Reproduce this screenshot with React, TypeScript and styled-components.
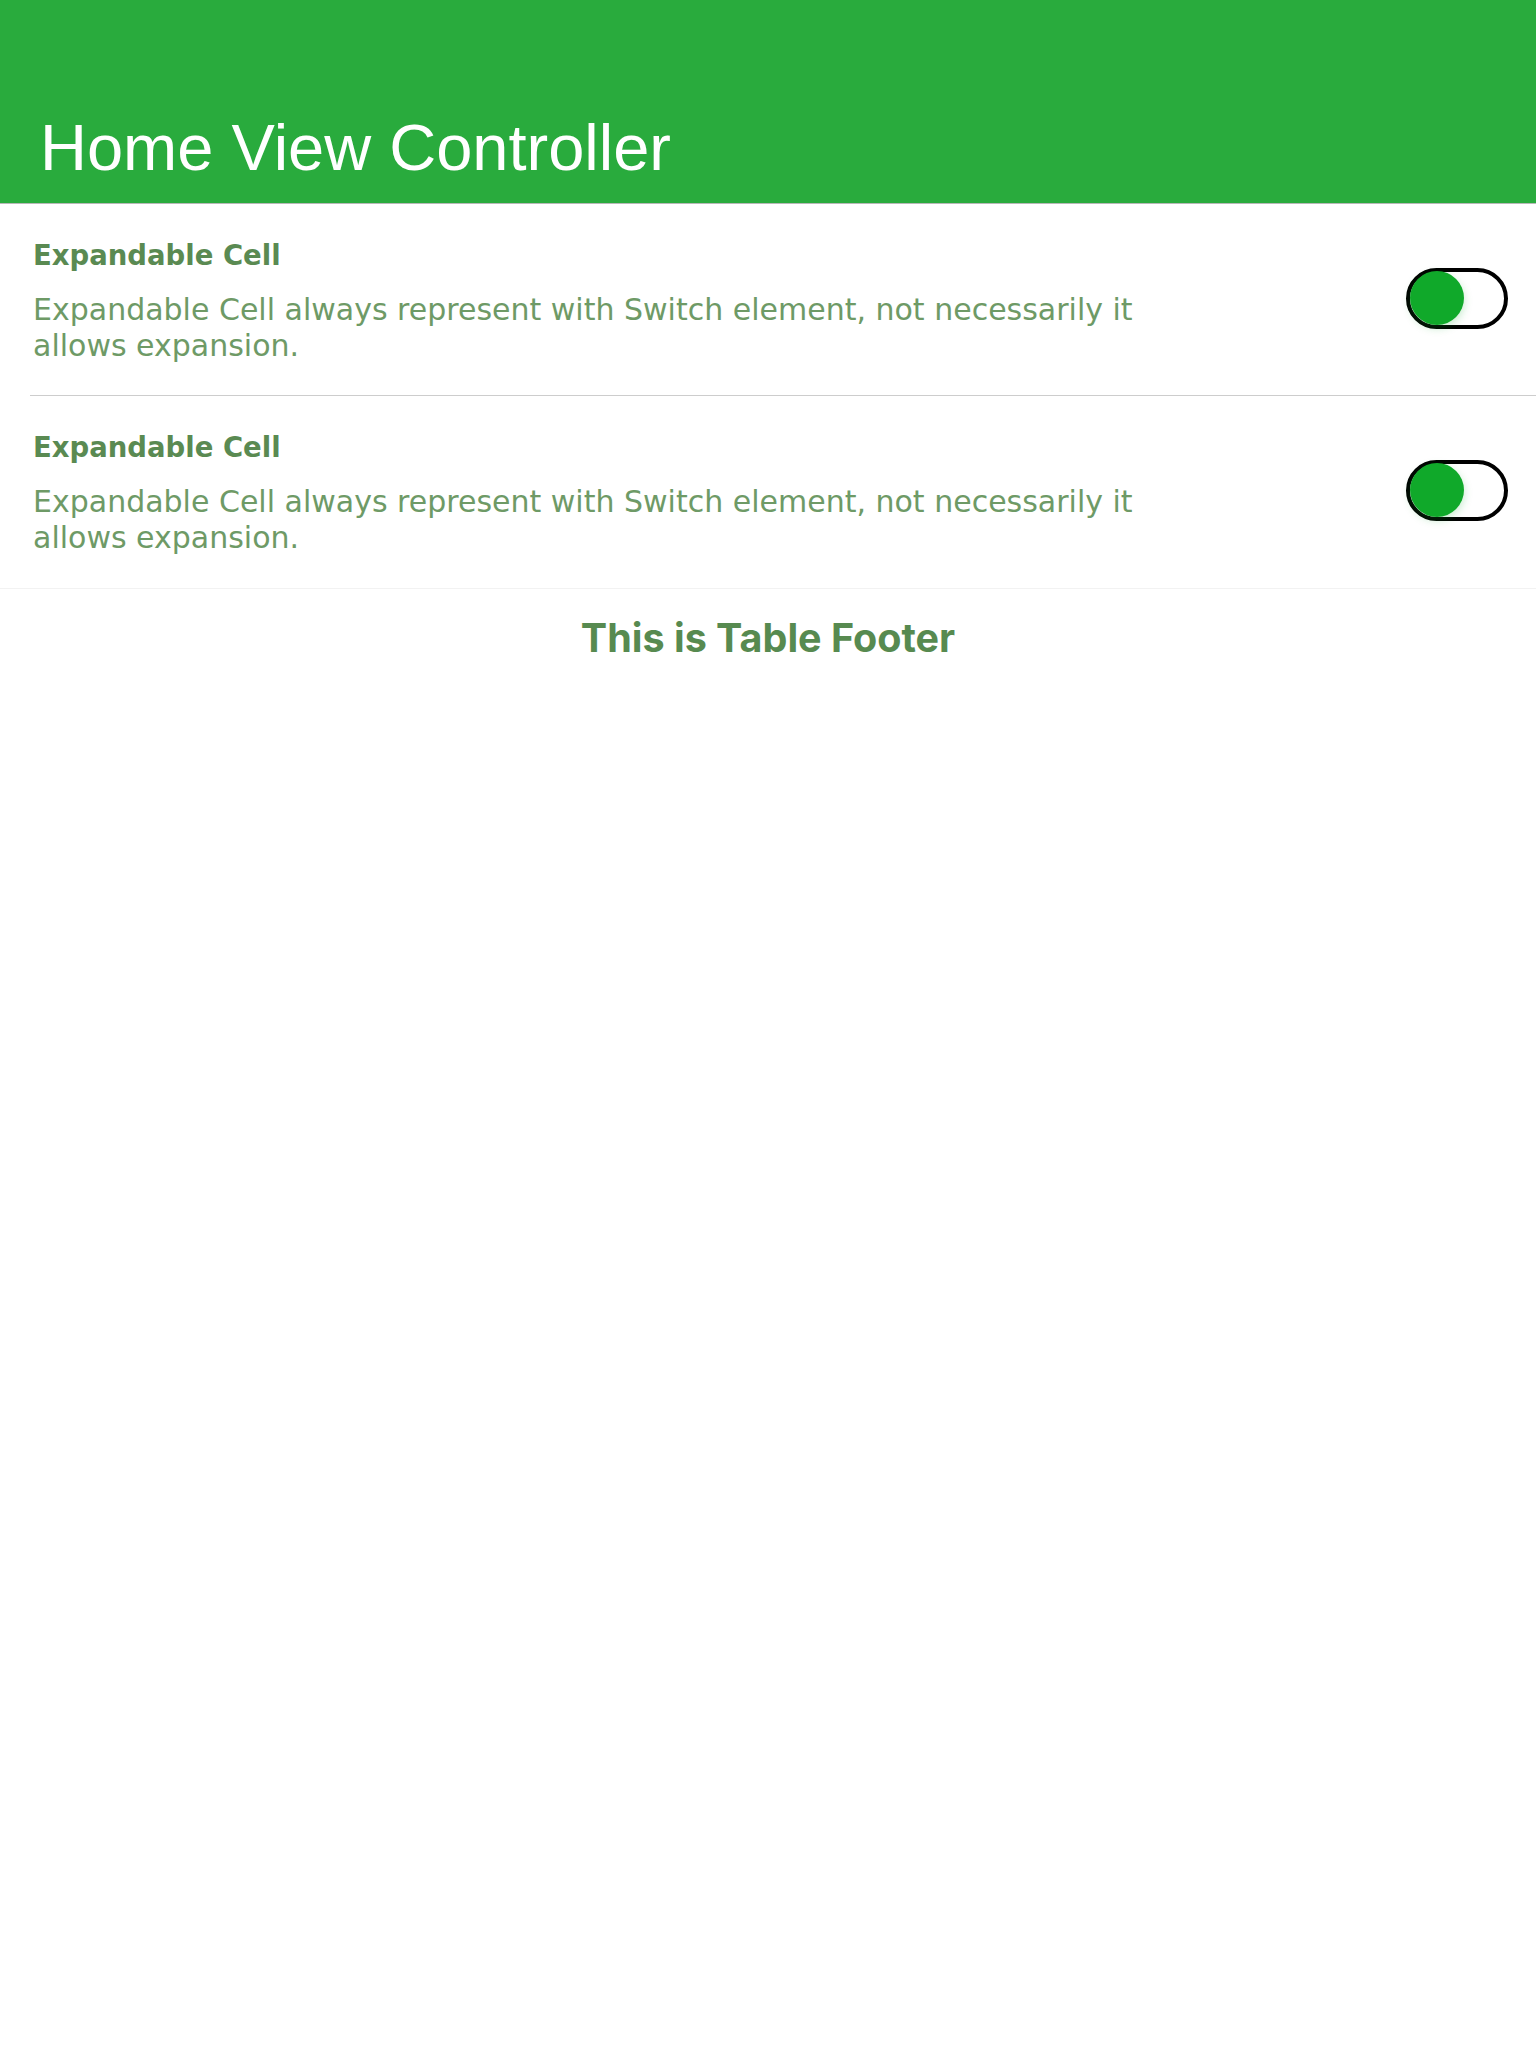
import React from 'react';
import styled, { createGlobalStyle } from 'styled-components';

const cells = [
  {
    title: 'Expandable Cell',
    description:
      'Expandable Cell always represent with Switch element, not necessarily it allows expansion.',
  },
  {
    title: 'Expandable Cell',
    description:
      'Expandable Cell always represent with Switch element, not necessarily it allows expansion.',
  },
];

const GlobalStyle = createGlobalStyle`
  body {
    margin: 0;
    background: #ffffff;
  }
`;

const App = () => (
  <>
    <GlobalStyle />
    <Page>
      <NavBar>
        <LargeTitle>Home View Controller</LargeTitle>
      </NavBar>
      <Table>
        {cells.map((cell, i) => (
          <Cell key={i} last={i === cells.length - 1}>
            <CellText>
              <CellTitle>{cell.title}</CellTitle>
              <CellDescription>{cell.description}</CellDescription>
            </CellText>
            <Switch>
              <Knob />
            </Switch>
          </Cell>
        ))}
      </Table>
      <Footer>This is Table Footer</Footer>
    </Page>
  </>
);

const Page = styled.div`
  width: 1536px;
  min-height: 2048px;
  background: #ffffff;
`;

const NavBar = styled.header`
  height: 204px;
  box-sizing: border-box;
  background: #29ab3d;
  display: flex;
  align-items: flex-end;
  padding: 0 0 17px 40px;
  border-bottom: 1px solid #b8b8b8;
`;

const LargeTitle = styled.h1`
  margin: 0;
  font-family: 'Liberation Sans', Arial, sans-serif;
  font-weight: 400;
  font-size: 65px;
  line-height: 76px;
  color: #ffffff;
`;

const Table = styled.div`
  display: flex;
  flex-direction: column;
  border-bottom: 1px solid #f2f2f2;
`;

interface CellProps {
  last: boolean;
}

const Cell = styled.div<CellProps>`
  position: relative;
  display: flex;
  align-items: center;
  justify-content: space-between;
  height: 192px;
  box-sizing: border-box;
  padding: 2px 28px 0 33px;

  &::after {
    content: '';
    display: ${(props) => (props.last ? 'none' : 'block')};
    position: absolute;
    left: 30px;
    right: 0;
    bottom: 0;
    height: 1px;
    background: #cdcdcd;
  }
`;

const CellText = styled.div`
  display: flex;
  flex-direction: column;
  gap: 21px;
  width: 1160px;
`;

const CellTitle = styled.div`
  font-family: 'DejaVu Sans', Verdana, sans-serif;
  font-weight: 700;
  font-size: 27.5px;
  line-height: 32px;
  color: #5a8a52;
`;

const CellDescription = styled.div`
  font-family: 'DejaVu Sans', Verdana, sans-serif;
  font-size: 30px;
  line-height: 36px;
  color: #6e9a66;
`;

const Switch = styled.div`
  width: 102px;
  height: 61px;
  box-sizing: border-box;
  margin-bottom: 6px;
  border: 4px solid #000000;
  border-radius: 31px;
  background: #ffffff;
  display: flex;
  align-items: center;
  flex-shrink: 0;
`;

const Knob = styled.div`
  width: 54px;
  height: 54px;
  border-radius: 50%;
  background: #10a92a;
  box-shadow: 0 3px 8px rgba(16, 169, 42, 0.25);
`;

const Footer = styled.div`
  padding-top: 24px;
  text-align: center;
  font-family: Inter, 'Liberation Sans', sans-serif;
  font-weight: 700;
  font-size: 39.5px;
  line-height: 50px;
  color: #578a50;
`;

export default App;
